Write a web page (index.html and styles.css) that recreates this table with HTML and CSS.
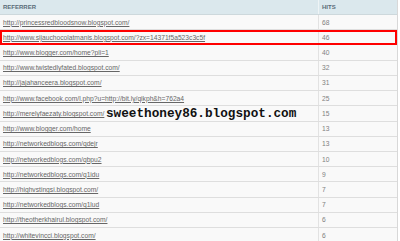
FILE: index.html
```html
<!DOCTYPE html>
<html>
<head>
<meta charset="utf-8">
<link rel="stylesheet" href="styles.css">
</head>
<body>
<div class="stats">
  <div class="row head"><div class="c1">REFERRER</div><div class="c2">HITS</div></div>
  <div class="row"><div class="c1"><a href="#">http://princessredbloodsnow.blogspot.com/</a></div><div class="c2">68</div></div>
  <div class="row hl"><div class="c1"><a href="#">http://www.sijauchocolatmanis.blogspot.com/?zx=14371f5a523c3c5f</a></div><div class="c2">46</div></div>
  <div class="row"><div class="c1"><a href="#">http://www.blogger.com/home?pli=1</a></div><div class="c2">40</div></div>
  <div class="row"><div class="c1"><a href="#">http://www.twistedlyfated.blogspot.com/</a></div><div class="c2">32</div></div>
  <div class="row"><div class="c1"><a href="#">http://jajahanceera.blogspot.com/</a></div><div class="c2">31</div></div>
  <div class="row"><div class="c1"><a href="#">http://www.facebook.com/l.php?u=http://bit.ly/qikph&amp;h=762a4</a></div><div class="c2">25</div></div>
  <div class="row"><div class="c1"><a href="#">http://merelyfaezaty.blogspot.com/</a></div><div class="c2">15</div></div>
  <div class="row"><div class="c1"><a href="#">http://www.blogger.com/home</a></div><div class="c2">13</div></div>
  <div class="row"><div class="c1"><a href="#">http://networkedblogs.com/qdejr</a></div><div class="c2">13</div></div>
  <div class="row"><div class="c1"><a href="#">http://networkedblogs.com/qbpu2</a></div><div class="c2">10</div></div>
  <div class="row"><div class="c1"><a href="#">http://networkedblogs.com/q1idu</a></div><div class="c2">9</div></div>
  <div class="row"><div class="c1"><a href="#">http://highvstingsi.blogspot.com/</a></div><div class="c2">7</div></div>
  <div class="row"><div class="c1"><a href="#">http://networkedblogs.com/q1lud</a></div><div class="c2">7</div></div>
  <div class="row"><div class="c1"><a href="#">http://theotherkhairul.blogspot.com/</a></div><div class="c2">6</div></div>
  <div class="row"><div class="c1"><a href="#">http://whitevincci.blogspot.com/</a></div><div class="c2">6</div></div>
  <div class="watermark">sweethoney86.blogspot.com</div>
</div>
</body>
</html>
```
FILE: styles.css
```css
html, body {
  margin: 0;
  padding: 0;
  background: #ffffff;
}
.stats {
  position: relative;
  width: 397px;
  border-right: 1px solid #d8d8d8;
  font-family: "Liberation Sans", Arial, sans-serif;
  font-size: 6.7px;
  color: #808080;
  background: #f9f9f9;
}
.row {
  display: grid;
  grid-template-columns: 318px 1fr;
  height: 15.22px;
  box-sizing: border-box;
  border-bottom: 1px solid #dedede;
}
.row.head {
  height: 15px;
  background: #dbe8ed;
  border-bottom: 1px solid #cdd8dc;
  font-weight: bold;
  font-size: 6px;
  color: #5a6c78;
}
.c1, .c2 {
  display: flex;
  align-items: center;
  padding-left: 3px;
}
.c2 {
  border-left: 1px solid #e2e2e2;
}
.row.head .c2 {
  border-left: 1px solid #eef4f6;
}
.c1 a {
  color: #666;
  text-decoration: underline;
  white-space: nowrap;
}
.row.hl {
  outline: 2px solid #f00;
  outline-offset: -2px;
  position: relative;
}
.watermark {
  position: absolute;
  left: 106px;
  top: 105.5px;
  font-family: "Liberation Mono", "Courier New", monospace;
  font-size: 12.7px;
  font-weight: bold;
  color: #111;
  line-height: 16px;
  white-space: nowrap;
}
```
